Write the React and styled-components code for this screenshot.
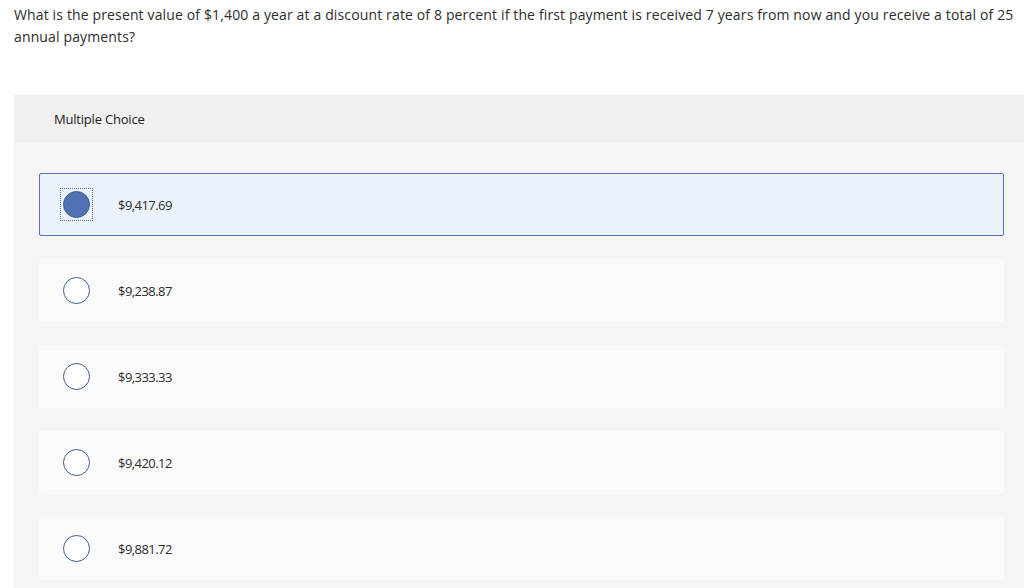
import React from "react";
import styled, { createGlobalStyle } from "styled-components";

const Global = createGlobalStyle`
  html, body { margin: 0; padding: 0; background: #fff; }
  body { font-family: "Open Sans", "Liberation Sans", sans-serif; color: #333; }
`;

const Page = styled.div`
  width: 1024px;
  height: 588px;
  overflow: hidden;
  box-sizing: border-box;
  padding: 4px 0 0 14px;
`;

const Question = styled.p`
  margin: 0;
  font-size: 14px;
  line-height: 22px;
  color: #2d2d2d;
  padding-right: 4px;
  letter-spacing: 0.14px;
`;

const Panel = styled.section`
  margin-top: 47px;
  background: #f5f5f5;
  min-height: 500px;
`;

const PanelHeader = styled.header`
  height: 48px;
  background: #f0f0f0;
  display: flex;
  align-items: center;
  padding-left: 40px;
  font-size: 13px;
  color: #222;
  letter-spacing: -0.2px;
`;

const Options = styled.div`
  display: flex;
  flex-direction: column;
  gap: 23px;
  padding: 30px 20px 0 25px;
`;

const Option = styled.label`
  box-sizing: border-box;
  height: 63px;
  display: flex;
  align-items: center;
  border-radius: 2px;
  border: 1px solid ${p => (p.$selected ? "#5873ad" : "#fafafa")};
  background: ${p => (p.$selected ? "#ebf2fa" : "#fafafa")};
  padding-left: 20px;
`;

const RadioWrap = styled.span`
  box-sizing: border-box;
  width: 33px;
  height: 33px;
  display: flex;
  align-items: center;
  justify-content: center;
  border: 1px dotted ${p => (p.$focused ? "#4a6fc0" : "transparent")};
`;

const Radio = styled.span`
  box-sizing: border-box;
  width: 27px;
  height: 27px;
  border-radius: 50%;
  border: 1px solid #3b5b94;
  background: ${p => (p.$checked ? "#5372b3" : "#fff")};
`;

const Value = styled.span`
  margin-left: 25px;
  font-size: 13px;
  color: #2d2d2d;
  letter-spacing: -0.55px;
`;

const choices = ["$9,417.69", "$9,238.87", "$9,333.33", "$9,420.12", "$9,881.72"];

export default function App() {
  return (
    <Page>
      <Global />
      <Question>
        What is the present value of $1,400 a year at a discount rate of 8 percent if the first payment is received 7 years from now and you receive a total of 25 annual payments?
      </Question>
      <Panel>
        <PanelHeader>Multiple Choice</PanelHeader>
        <Options>
          {choices.map((c, i) => (
            <Option key={c} $selected={i === 0}>
              <RadioWrap $focused={i === 0}>
                <Radio $checked={i === 0} />
              </RadioWrap>
              <Value>{c}</Value>
            </Option>
          ))}
        </Options>
      </Panel>
    </Page>
  );
}
